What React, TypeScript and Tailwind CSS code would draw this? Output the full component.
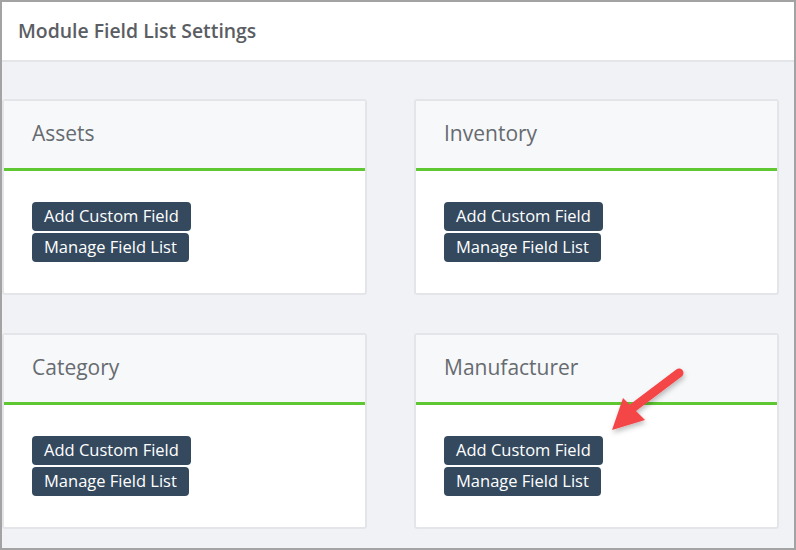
import React from "react";

const Card = ({ title }: { title: string }) => (
  <div className="h-[196px] border-2 border-[#e3e5e9] rounded-[3px] bg-white flex flex-col overflow-hidden">
    <div className="h-[70px] shrink-0 bg-[#f7f8fa] border-b-[3px] border-[#5ec732] flex items-center pl-[28px] text-[21px] text-[#666b70] pb-[1px]">
      {title}
    </div>
    <div className="flex flex-col items-start gap-[2px] pl-[28px] pt-[31px]">
      <button className="h-[29px] px-[12px] bg-[#34495e] text-white text-[16.5px] rounded-[4px] leading-none">
        Add Custom Field
      </button>
      <button className="h-[29px] px-[12px] bg-[#34495e] text-white text-[16.5px] rounded-[4px] leading-none">
        Manage Field List
      </button>
    </div>
  </div>
);

export default function App() {
  return (
    <div
      className="relative w-[796px] h-[550px] border-2 border-[#a3a3a3] bg-[#f0f2f6] overflow-hidden"
      style={{ fontFamily: '"Open Sans", sans-serif' }}
    >
      <div className="h-[60px] bg-white border-b-2 border-[#e3e5e8] flex items-center pl-[16px] text-[19.4px] font-semibold text-[#5a5e63]">
        Module Field List Settings
      </div>
      <div className="grid grid-cols-[365px_365px] gap-x-[47px] gap-y-[38px] pt-[37px]">
        <Card title="Assets" />
        <Card title="Inventory" />
        <Card title="Category" />
        <Card title="Manufacturer" />
      </div>
      <svg
        className="absolute left-0 top-0 pointer-events-none"
        width="796"
        height="550"
        viewBox="0 0 796 550"
      >
        <defs>
          <filter id="sh" x="-20%" y="-20%" width="140%" height="140%">
            <feDropShadow dx="1" dy="3" stdDeviation="2.5" floodColor="#000" floodOpacity="0.25" />
          </filter>
        </defs>
        <g filter="url(#sh)" transform="translate(-2,-2)">
          <line x1="679" y1="373" x2="630" y2="410" stroke="#f44447" strokeWidth="9" strokeLinecap="round" />
          <polygon points="612,430 623,398 645,420" fill="#f44447" />
        </g>
      </svg>
    </div>
  );
}
